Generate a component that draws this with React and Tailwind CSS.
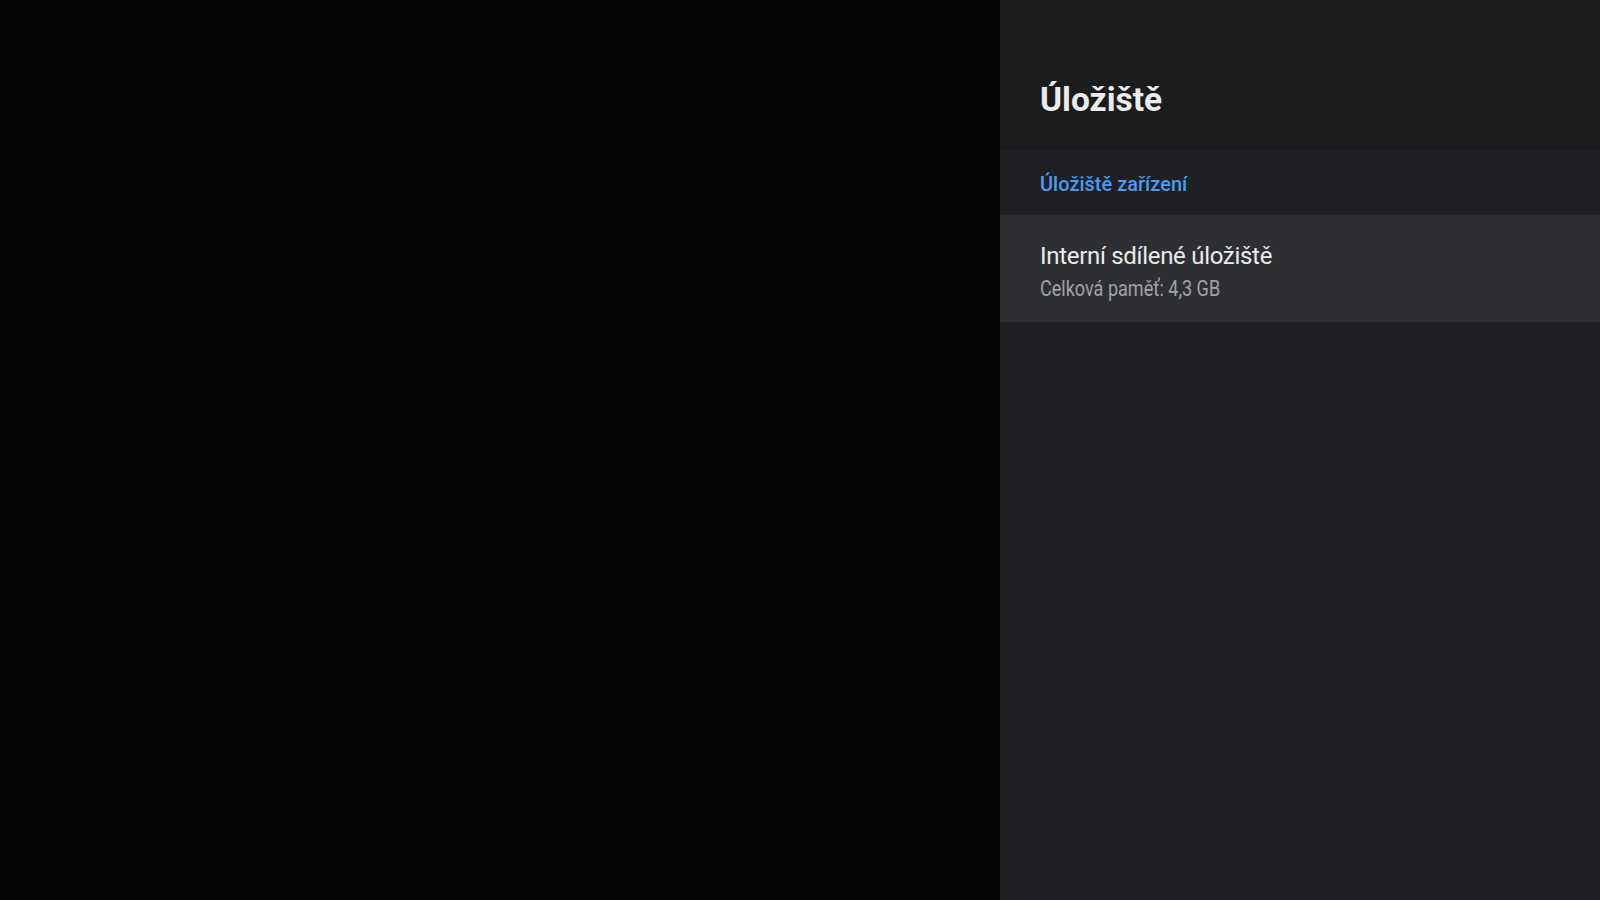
export default function App() {
  return (
    <div className="flex h-[900px] w-[1600px] overflow-hidden" style={{ fontFamily: "Roboto, 'Noto Sans', sans-serif" }}>
      <div className="h-full w-[1000px] bg-[#050505]" />
      <div className="flex h-full w-[600px] flex-col bg-[#202124]">
        <div className="flex h-[150px] items-start bg-[#1b1c1e] pl-10 pt-[78px] shadow-[0_1px_3px_rgba(0,0,0,0.4)]">
          <h1 className="text-[33.5px] font-bold leading-[44px] text-[#ececec]">Úložiště</h1>
        </div>
        <div className="flex h-[65px] items-center bg-[#1f2023] pl-10 pt-[2px]">
          <span className="text-[20px] font-medium text-[#4a9cf0]">Úložiště zařízení</span>
        </div>
        <div className="flex h-[107px] flex-col items-start bg-[#2e2f33] pl-10 pt-[25px]">
          <span className="text-[24px] leading-[32px] tracking-[-0.3px] text-[#ebebeb]">Interní sdílené úložiště</span>
          <span className="mt-[2px] inline-block origin-left scale-x-[0.82] whitespace-nowrap text-[22px] leading-[30px] text-[#a3a3a3]">Celková paměť: 4,3 GB</span>
        </div>
      </div>
    </div>
  );
}
